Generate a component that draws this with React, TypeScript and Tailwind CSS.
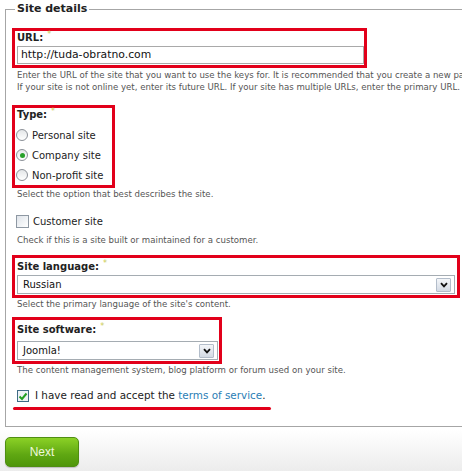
import type { ReactNode } from 'react';

/** 必須マーク */
function Req() {
  return <span className="ml-[4px] align-top text-[8px] font-normal leading-none text-[#cccc55]">*</span>;
}

function Label({ children }: { children: ReactNode }) {
  return (
    <div className="pl-[2px] text-[10px] font-bold leading-[14px] text-[#222]">
      {children}
      <Req />
    </div>
  );
}

function Desc({ children }: { children: ReactNode }) {
  return <div className="whitespace-nowrap pl-[5px] text-[8.6px] leading-[12px] text-[#555]">{children}</div>;
}

function Radio({ label, checked }: { label: string; checked?: boolean }) {
  return (
    <div className="flex h-5 items-center gap-[4px] pl-[1px]">
      <span className="flex size-[12px] items-center justify-center rounded-full border border-[#8b9097] bg-[linear-gradient(#e4e6e8,#ffffff)]">
        {checked && <span className="size-[5px] rounded-full bg-[#27a02a]" />}
      </span>
      <span className="whitespace-nowrap text-[10px] text-[#222]">{label}</span>
    </div>
  );
}

function Select({ value }: { value: string }) {
  return (
    <div className="flex h-[19px] items-center border border-[#a5acb2] bg-white pl-[5px] pr-[3px]">
      <span className="flex-1 text-[10px] text-[#111]">{value}</span>
      <span className="flex h-[14px] w-[15px] items-center justify-center rounded-[1px] border border-[#b3bdca] bg-[linear-gradient(#f4f6f9,#d3dae4)]">
        <svg width="8" height="6" viewBox="0 0 8 6" aria-hidden="true">
          <path d="M1 1.2 L4 4.4 L7 1.2" fill="none" stroke="#111" strokeWidth="1.8" />
        </svg>
      </span>
    </div>
  );
}

const RED = 'border-[3px] border-[#e2001a]';

export default function App() {
  return (
    <div className="relative h-[471px] w-[462px] overflow-hidden bg-[linear-gradient(180deg,#ffffff_0px,#ffffff_430px,#ececec_471px)] font-['DejaVu_Sans',Verdana,sans-serif]">
      <fieldset className="ml-[5px] w-[520px] border border-[#a6a6a6] pb-[16px] pl-[6px]">
        <legend className="ml-[3px] px-[2px] text-[11px] font-bold leading-[18px] text-[#222]">Site details</legend>

        {/* URL */}
        <div className={`${RED} mt-[10px] w-[355px] pb-[1px]`}>
          <Label>URL:</Label>
          <div className="ml-[2px] mt-[1px] h-[18px] border border-[#a9a9a9] pl-[3px] text-[10.8px] leading-[16px] text-[#111]">
            http://tuda-obratno.com
          </div>
        </div>
        <div className="mt-[1px]">
          <Desc>Enter the URL of the site that you want to use the keys for. It is recommended that you create a new page for each site.</Desc>
          <Desc>If your site is not online yet, enter its future URL. If your site has multiple URLs, enter the primary URL.</Desc>
        </div>

        {/* Type */}
        <div className={`${RED} mt-[12px] w-[103px]`}>
          <Label>Type:</Label>
          <div className="mt-[3px]">
            <Radio label="Personal site" />
            <Radio label="Company site" checked />
            <Radio label="Non-profit site" />
          </div>
        </div>
        <Desc>Select the option that best describes the site.</Desc>

        <div className="mt-[11px] flex h-5 items-center gap-[4px] pl-[4px]">
          <span className="size-[13px] border border-[#8e98a3] bg-[linear-gradient(135deg,#dfe4ea,#ffffff)]" />
          <span className="text-[10px] text-[#222]">Customer site</span>
        </div>
        <div className="mt-[3px]">
          <Desc>Check if this is a site built or maintained for a customer.</Desc>
        </div>

        {/* Site language */}
        <div className={`${RED} mt-[9px] w-[448px] pb-[1px] pr-[2px] pt-[2px]`}>
          <Label>Site language:</Label>
          <div className="ml-[2px] mt-[1px]">
            <Select value="Russian" />
          </div>
        </div>
        <Desc>Select the primary language of the site&apos;s content.</Desc>

        {/* Site software */}
        <div className={`${RED} mt-[7px] w-[210px] pb-[1px] pr-[1px] pt-[3px]`}>
          <Label>Site software:</Label>
          <div className="ml-[2px] mt-[4px]">
            <Select value="Joomla!" />
          </div>
        </div>
        <Desc>The content management system, blog platform or forum used on your site.</Desc>

        {/* 利用規約 */}
        <div className="mt-[10px] flex h-5 items-center gap-[6px] pl-[5px]">
          <span className="flex size-[12px] items-center justify-center border border-[#3f6b85] bg-[#eef3f6]">
            <svg width="10" height="9" viewBox="0 0 10 9" aria-hidden="true">
              <path d="M1.5 4.5 L4 7 L8.5 1.5" fill="none" stroke="#23a023" strokeWidth="2" />
            </svg>
          </span>
          <span className="whitespace-nowrap text-[10.4px] text-[#222]">
            I have read and accept the <span className="text-[#2a7db5]">terms of service</span>.
          </span>
        </div>
        <div className="ml-[1px] mt-[1px] h-[3px] w-[258px] rounded-full bg-[#e2001a]" />
      </fieldset>

      <button
        type="button"
        className="ml-[5px] mt-[10px] flex h-[30px] w-[74px] items-center justify-center rounded-[5px] border border-[#4f8e12] bg-[linear-gradient(#8bd126,#5fa712_60%,#4f960a)] font-['Liberation_Sans',Arial,sans-serif] text-[12px] text-[#eef8dd] shadow-[0_1px_1px_rgba(0,0,0,0.2)]"
      >
        Next
      </button>
    </div>
  );
}
